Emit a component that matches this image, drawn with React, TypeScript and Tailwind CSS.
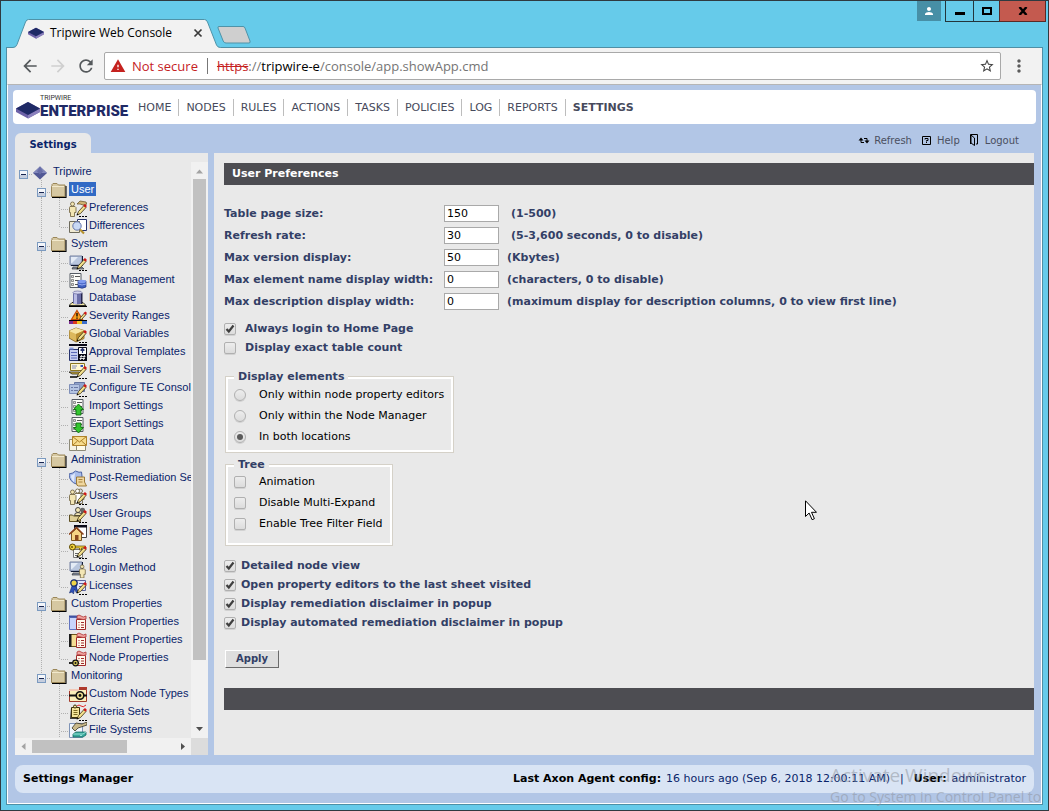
import type { ReactNode } from "react";
import { MdArrowBack, MdArrowForward, MdMoreVert, MdPerson, MdRefresh, MdStarBorder, MdWarning } from "react-icons/md";

const VERDANA = "font-['Verdana','DejaVu_Sans',sans-serif]";

/* ---------- tree icons, drawn on an 18x18 grid ---------- */

const Pencil = () => (
  <g>
    <path d="M8 15l1.500-3.500 5.500-6 2 2-5.500 6z" fill="#f3e08c" stroke="#3a2c10" strokeWidth="0.8" />
    <path d="M14.300 5.500l1.700-1.500 2 2-1.700 1.800z" fill="#d01818" />
    <path d="M7.500 15.500l1-2 1 1z" fill="#000" />
    <path d="M10 16.500h8" stroke="#000" strokeDasharray="2 1" />
  </g>
);

const Person = ({ x = 0, y = 0, fill = "#f3e6b4" }: { x?: number; y?: number; fill?: string }) => (
  <g transform={`translate(${x} ${y})`} fill={fill} stroke="#6b5d3a" strokeWidth="0.8">
    <circle cx="3.5" cy="3" r="2" />
    <path d="M1 5.500h5l1 1v5H5.500v4h-4v-4H.5v-5z" />
  </g>
);

const Screen = () => (
  <g>
    <path d="M1 2h12v9H1z" fill="#b9c6de" stroke="#7480a0" />
    <path d="M2 3h7l-6 6H2z" fill="#e4ebf6" />
    <path d="M13.500 2v9.500H2" fill="none" stroke="#111a35" />
    <path d="M4 13h9l2 2H3z" fill="#8a94a8" stroke="#222" strokeWidth="0.6" />
  </g>
);

const Sheet = ({ x = 2, y = 1 }: { x?: number; y?: number }) => (
  <g transform={`translate(${x} ${y})`}>
    <path d="M0 .5h11v14H0z" fill="#fbfbf7" stroke="#555b63" />
    <path d="M5 3.500h5M5 7.500h5M5 11.500h5" stroke="#555" />
    <path d="M1.500 2.500h2v2h-2zM1.500 6.500h2v2h-2zM1.500 10.500h2v2h-2z" fill="#ddd" stroke="#666" strokeWidth="0.7" />
  </g>
);

const RedSheet = () => (
  <g>
    <path d="M7.500 5.500h9v10h-9z" fill="#fff8ea" stroke="#a02b2b" />
    <path d="M8 2q2-2 4 0t5 0v3q-3 1-5 0t-4 0z" fill="#f0a5a0" stroke="#b03434" strokeWidth="0.8" />
    <path d="M9.500 8.500h1M12 8.500h3M9.500 11h1M12 11h3M9.500 13.500h1M12 13.500h3" stroke="#a02b2b" />
  </g>
);

const glyphs: Record<string, ReactNode> = {
  userPrefs: (
    <g>
      <Person y={1} />
      <path d="M8 4l3-3 6 1 1 2-4 1-3-1z" fill="#cfb475" stroke="#5e4a1e" strokeWidth="0.7" />
      <Pencil />
    </g>
  ),
  differences: (
    <g>
      <path d="M8.500 1.500h9v11h-9z" fill="#fff" stroke="#27336e" />
      <path d="M.5 3.500h10v11H.5z" fill="#efe9d2" stroke="#6d6a5c" />
      <circle cx="8" cy="8" r="4.200" fill="#c8d8f4" stroke="#6676ac" />
      <path d="M11 11.500l4 4" stroke="#b5922e" strokeWidth="2.200" />
    </g>
  ),
  system: (
    <g>
      <Screen />
      <Pencil />
    </g>
  ),
  log: (
    <g>
      <Sheet x={1} />
      <path d="M9 9v6q4 2.500 8 0V9z" fill="#3f5fc0" stroke="#23357e" strokeWidth="0.7" />
      <ellipse cx="13" cy="9.500" rx="4" ry="1.800" fill="#7f9af0" />
      <path d="M9 12q4 2 8 0" fill="none" stroke="#aebfff" strokeWidth="0.8" />
    </g>
  ),
  database: (
    <g>
      <path d="M0 15.500l3-3h11l3 3z" fill="#f3e7a6" stroke="#000" strokeWidth="0.8" />
      <path d="M0 16.500h18" stroke="#000" />
      <path d="M4 2.500v11q4.500 2 9 0v-11z" fill="#6d6fa8" />
      <path d="M5 3v11h3V3z" fill="#b9bbe4" />
      <path d="M12 3h1.500v11H12z" fill="#26264f" />
      <ellipse cx="8.500" cy="2.500" rx="4.500" ry="1.500" fill="#d5d6ef" stroke="#55568c" strokeWidth="0.6" />
    </g>
  ),
  severity: (
    <g>
      <path d="M8 2.500l5.500 9h-11z" fill="#f8a21e" stroke="#c84d0a" strokeWidth="1.200" />
      <path d="M8 5v3.500M8 9.500v1.200" stroke="#000" strokeWidth="1.300" />
      <path d="M10.500 11.500l1-2 4-4.500 1.500 1.500-4.500 5z" fill="#f3e08c" stroke="#3a2c10" strokeWidth="0.8" />
      <path d="M14.500 5l2-1.500 1.500 1.500-1.500 2z" fill="#d01818" />
      <path d="M0 12.500h18" stroke="#000" />
      <path d="M0 13h4v3H0z" fill="#7b2c8f" />
      <path d="M4 13h4v3H4z" fill="#db3a20" />
      <path d="M8 13h5v3H8z" fill="#f2c520" />
      <path d="M13 13h5v3h-5z" fill="#3c6fcb" />
    </g>
  ),
  variables: (
    <g>
      <path d="M0 5l7-3 8 2.500v8L7 16l-7-4z" fill="#dcb85c" stroke="#7d5c14" strokeWidth="0.8" />
      <path d="M0 5l7 3 8-3.500L7 2z" fill="#f6e5a4" />
      <path d="M7 8v8l8-3.500v-8z" fill="#b98e31" />
      <Pencil />
    </g>
  ),
  approval: (
    <g>
      <path d="M0 0h18v2H0z" fill="#0a0a18" />
      <path d="M.5 5.500h9v11h-9z" fill="#c5cdf0" stroke="#27336e" />
      <path d="M.5 3.500h4v2h-4z" fill="#8b9be0" />
      <path d="M2 8.500h6M2 11.500h6M2 14h6" stroke="#5a68b8" />
      <path d="M9.500 3.500h8v13h-8z" fill="#fff" stroke="#0a0a18" />
      <path d="M13.500 4v5M11.500 6.500l2-2 2 2" stroke="#27336e" strokeWidth="1.200" fill="none" />
      <path d="M9 10h9v7H9z" fill="#0a0a18" />
      <path d="M12.500 11l-1 5M15.500 11l-1 5M11 12.500h5.500M10.500 14.500H16" stroke="#fff" strokeWidth="0.8" />
    </g>
  ),
  email: (
    <g>
      <path d="M1.500 1.500h14v7h-14z" fill="#fff7d0" stroke="#8a741f" />
      <path d="M3 4h5M3 6h4" stroke="#8089bb" />
      <path d="M11.500 3h2.500v2h-2.500z" fill="#2f55c0" />
      <path d="M0 10h10l3 2H3z" fill="#e3c24c" stroke="#000" strokeWidth="0.7" />
      <path d="M1 15h7" stroke="#000" strokeWidth="1.500" />
      <Pencil />
    </g>
  ),
  configure: (
    <g>
      <path d="M5.500 2.500h10v9h-10z" fill="#8fa3cc" stroke="#6474a0" />
      <path d="M.5 4.500h10v9H.5z" fill="#b4c4e2" stroke="#7f8fb8" />
      <path d="M2 7.500h2M5 7.500h4M2 10.500h2M5 10.500h4" stroke="#6b7aa6" />
      <Pencil />
    </g>
  ),
  importing: (
    <g>
      <Sheet x={3} />
      <path d="M9.500 6l5 5.500h-2.500v5.500H7v-5.500H4.500z" fill="#34c52e" stroke="#0f6e10" strokeWidth="0.9" />
    </g>
  ),
  exporting: (
    <g>
      <Sheet x={3} />
      <path d="M9.500 17l5-5.500H12V7H7v4.500H4.500z" fill="#34c52e" stroke="#0f6e10" strokeWidth="0.9" />
    </g>
  ),
  support: (
    <g>
      <path d="M.5 5.500h12v11H.5z" fill="#f7f3e2" stroke="#8d8a78" />
      <path d="M7.500 11.500h9v5h-9z" fill="#fffbe9" stroke="#8d8a78" />
      <path d="M3.500 2.500h14v9h-14z" fill="#f7dc8c" stroke="#b0832b" />
      <path d="M3.500 2.500l7 5.500 7-5.500M4 11l4.500-4M17 11l-4.500-4" fill="none" stroke="#a1741c" strokeWidth="0.9" />
    </g>
  ),
  remediation: (
    <g>
      <path d="M6.500 1q4 2 6 1 2 9-4 12.500Q0 12 0 4q4-.5 6.500-3z" fill="#a9bdea" stroke="#4c63a4" />
      <path d="M6 3q-2 2-4 2.500 0 4 3 6.500z" fill="#dfe8fb" />
      <path d="M7.500 7h8v5l2 4h-8q-2 0-2-3z" fill="#f0d79e" stroke="#946f29" strokeWidth="0.9" />
      <path d="M9.500 9.500h4M9.500 12h4" stroke="#946f29" strokeWidth="0.8" />
    </g>
  ),
  users: (
    <g>
      <Person x={8} fill="#d8dcea" />
      <Person x={5} y={0} fill="#fff" />
      <Person x={0} y={1} />
      <Pencil />
    </g>
  ),
  groups: (
    <g>
      <path d="M12 2q4-1 4 2v4h-4z" fill="#666" />
      <circle cx="9" cy="4" r="2.500" fill="#f3e6b4" stroke="#222" strokeWidth="0.8" />
      <path d="M5.500 9.500q0-3 3.500-3t3.500 3z" fill="#f3e6b4" stroke="#222" strokeWidth="0.8" />
      <path d="M.5 9h3l1 1h7v5.500H.5z" fill="#dfcf96" stroke="#5d4f22" />
      <Pencil />
    </g>
  ),
  home: (
    <g>
      <path d="M5.500 2.500h12v11h-12z" fill="#fff" stroke="#444" />
      <path d="M5 1h13v2.500H5z" fill="#0a0a18" />
      <path d="M2.500 9v7.500h10V9l-5-4.500z" fill="#f6d483" stroke="#7d5620" />
      <path d="M0 10.500L7.500 3.500l7 7" fill="none" stroke="#8a3f17" strokeWidth="1.500" />
      <path d="M6 11h3.500v5.500H6z" fill="#8a4a1e" />
    </g>
  ),
  roles: (
    <g>
      <path d="M4.500 7.500h9v8h-9z" fill="#f8f8f0" stroke="#777" />
      <path d="M6 11.500h4M6 13.500h3" stroke="#666" />
      <circle cx="3.500" cy="5" r="3" fill="#f1d23c" stroke="#5c4700" />
      <circle cx="3" cy="5" r="0.900" fill="#5c4700" />
      <path d="M6.500 4h10v4h-2V6h-2v2h-2V6h-4z" fill="#f1d23c" stroke="#5c4700" strokeWidth="0.7" />
      <Pencil />
    </g>
  ),
  login: (
    <g>
      <Screen />
      <g transform="translate(10 4) scale(0.9)">
        <Person />
      </g>
    </g>
  ),
  licenses: (
    <g>
      <path d="M7.500 2.500h9v10h-9z" fill="#e0e4fa" stroke="#5a6299" />
      <path d="M10 5.500h5M10 8.500h4" stroke="#5a6299" />
      <path d="M3 8l-2.500 7 2.500-1 1.500 2 1-5 2 4 1.500-2L6.500 8z" fill="#2d50b8" stroke="#142a6e" strokeWidth="0.6" />
      <circle cx="5" cy="5" r="3.200" fill="#f0d548" stroke="#142a6e" strokeWidth="1.300" />
      <Pencil />
    </g>
  ),
  version: (
    <g>
      <path d="M.5 3.500h8v12h-8z" fill="#c9d4fb" stroke="#6274c0" />
      <path d="M0 1.500h9v2H0z" fill="#4053a3" />
      <RedSheet />
    </g>
  ),
  element: (
    <g>
      <path d="M.5 2.500h9v12h-9z" fill="#f3dd92" stroke="#6a551a" />
      <path d="M0 2h2.500v13H0z" fill="#1b1b1b" />
      <RedSheet />
    </g>
  ),
  node: (
    <g>
      <RedSheet />
      <path d="M0 13h10" stroke="#111" strokeWidth="1.800" />
      <circle cx="6.500" cy="13" r="2.800" fill="#d6c55a" stroke="#111" strokeWidth="1.200" />
      <circle cx="6.500" cy="13" r="1" fill="#111" />
    </g>
  ),
  nodeTypes: (
    <g>
      <path d="M.5 3.500h17v12H.5z" fill="#fbf0bb" stroke="#a33a2b" />
      <path d="M0 3h10v2H0z" fill="#f3c9b7" />
      <path d="M10 1h8v2.500h-8z" fill="#b03a2e" />
      <path d="M0 9.500h18" stroke="#111" strokeWidth="2" />
      <circle cx="11" cy="9.500" r="3.800" fill="#efdf8f" stroke="#111" strokeWidth="1.600" />
      <circle cx="11" cy="9.500" r="1.400" fill="#111" />
    </g>
  ),
  criteria: (
    <g>
      <path d="M1 15l1-11h8v11H2z" fill="#3d3d3d" />
      <path d="M2.500 3.500h8v10h-8z" fill="#f4e59a" stroke="#3b2f0a" />
      <circle cx="6" cy="2.500" r="1.500" fill="#f4e59a" stroke="#3b2f0a" />
      <path d="M4.500 6.500h4M4.500 8.500h4M4.500 10.500h4" stroke="#7b6a22" />
      <path d="M8 2q2-2 4 0t5-1" fill="none" stroke="#e02828" />
      <Pencil />
    </g>
  ),
  files: (
    <g>
      <path d="M.5 1.500h13v14H.5z" fill="#f0f6fc" stroke="#7e93b6" />
      <path d="M3 6l4-5 6 1 5-2v3l-6 2-3 1-3 3z" fill="#c9b98a" stroke="#3a3524" strokeWidth="0.8" />
      <path d="M4 12l3-2h10v3l-3 2H4z" fill="#38a89b" stroke="#146b62" strokeWidth="0.8" />
      <path d="M4 12h10l3-2M11 13.500h2" fill="none" stroke="#aef0e6" strokeWidth="0.8" />
    </g>
  ),
};

const Folder = () => (
  <svg viewBox="1 0 18 18" className="mt-0.5 size-[18px] shrink-0" aria-hidden="true">
    <path d="M2 4.500V2.500l1-1h4l1.500 1.500h6.500v11.500H1.500v-10z" fill="#d6c8a2" stroke="#9a8658" />
    <path d="M2 4.500h12" stroke="#f2e9cc" />
    <path d="M16 4v11.500H2" fill="none" stroke="#000" strokeWidth="1.100" />
  </svg>
);

const Toggle = ({ up = true, down = true }: { up?: boolean; down?: boolean }) => (
  <svg viewBox="0 0 18 18" className="size-[18px] shrink-0" shapeRendering="crispEdges" aria-hidden="true">
    {up && <path d="M8.500 0v8" stroke="#b0b0b0" strokeDasharray="1 1" />}
    {down && <path d="M8.500 17v1" stroke="#b0b0b0" />}
    <path d="M14 12.500h4" stroke="#b0b0b0" strokeDasharray="1 1" />
    <path d="M4.500 8.500h8v8h-8z" fill="#f4f6fa" stroke="#7b9ac0" />
    <path d="M5 13h7v3H5z" fill="#c6cede" />
    <path d="M6 12.500h5" stroke="#16244f" />
  </svg>
);

const Guide = ({ tee, last }: { tee?: boolean; last?: boolean }) => (
  <svg viewBox="0 0 18 18" className="size-[18px] shrink-0" shapeRendering="crispEdges" aria-hidden="true">
    <path d={last ? "M8.500 0v12" : "M8.500 0v18"} stroke="#b0b0b0" strokeDasharray="1 1" />
    {tee && <path d="M10 11.500h7" stroke="#b0b0b0" strokeDasharray="1 1" />}
  </svg>
);

type Group = { name: string; items: [string, string][] };

const groups: Group[] = [
  { name: "User", items: [["Preferences", "userPrefs"], ["Differences", "differences"]] },
  {
    name: "System",
    items: [
      ["Preferences", "system"],
      ["Log Management", "log"],
      ["Database", "database"],
      ["Severity Ranges", "severity"],
      ["Global Variables", "variables"],
      ["Approval Templates", "approval"],
      ["E-mail Servers", "email"],
      ["Configure TE Console", "configure"],
      ["Import Settings", "importing"],
      ["Export Settings", "exporting"],
      ["Support Data", "support"],
    ],
  },
  {
    name: "Administration",
    items: [
      ["Post-Remediation Settings", "remediation"],
      ["Users", "users"],
      ["User Groups", "groups"],
      ["Home Pages", "home"],
      ["Roles", "roles"],
      ["Login Method", "login"],
      ["Licenses", "licenses"],
    ],
  },
  {
    name: "Custom Properties",
    items: [["Version Properties", "version"], ["Element Properties", "element"], ["Node Properties", "node"]],
  },
  {
    name: "Monitoring",
    items: [["Custom Node Types", "nodeTypes"], ["Criteria Sets", "criteria"], ["File Systems", "files"]],
  },
];

const Arrow = ({ d, fill = "#505050" }: { d: string; fill?: string }) => (
  <svg viewBox="0 0 17 17" className="size-[17px] shrink-0" aria-hidden="true">
    <path d={d} fill={fill} />
  </svg>
);

function Tree() {
  return (
    <aside className="flex w-[193px] shrink-0 flex-col bg-[#e9e9e9]">
      <div className="flex min-h-0 flex-1 pt-[9px]">
        <ul className="min-w-0 flex-1 overflow-hidden font-['Liberation_Sans',Arial,sans-serif] text-[11px] leading-[18px] whitespace-nowrap text-[#0a246a]">
          <li className="flex h-[18px]">
            <Toggle up={false} down={false} />
            <svg viewBox="0 0 18 18" className="mt-0.5 size-[18px] shrink-0" aria-hidden="true">
              <path d="M7 2.500l7 6.500-7 6.500L0 9z" fill="#515895" />
              <path d="M7 2.500L0 9h14z" fill="#8187bb" />
              <path d="M7 2.500l3 5-3 3-3-3z" fill="#696fa8" />
            </svg>
            <a href="#tripwire" className="px-0.5">Tripwire</a>
          </li>
          {groups.map((group, g) => {
            const lastGroup = g === groups.length - 1;
            return (
              <li key={group.name}>
                <div className="flex h-[18px] pl-[18px]">
                  <Toggle down={!lastGroup} />
                  <Folder />
                  <a
                    href={"#" + group.name}
                    className={g === 0 ? "my-0.5 h-[14px] bg-[#316ac5] px-0.5 leading-[14px] text-white" : "px-0.5"}
                  >
                    {group.name}
                  </a>
                </div>
                <ul>
                  {group.items.map(([label, icon], i) => (
                    <li key={label} className={lastGroup ? "flex h-[18px] pl-9" : "flex h-[18px] pl-[18px]"}>
                      {!lastGroup && <Guide />}
                      <Guide tee last={!lastGroup && i === group.items.length - 1} />
                      <svg viewBox="0 0 18 18" className="mt-0.5 size-[18px] shrink-0" aria-hidden="true">
                        {glyphs[icon]}
                      </svg>
                      <a href={"#" + icon} className="px-0.5">{label}</a>
                    </li>
                  ))}
                </ul>
              </li>
            );
          })}
        </ul>
        <div className="flex w-[17px] shrink-0 flex-col items-center bg-[#f1f1f1]" aria-hidden="true">
          <Arrow d="M5 11.500l3.500-4 3.500 4z" fill="#a3a3a3" />
          <div className="flex w-full flex-1 flex-col items-center">
            <div className="w-[13px] flex-[480] bg-[#c1c1c1]" />
            <div className="flex-[61]" />
          </div>
          <Arrow d="M5 6l3.500 4L12 6z" />
        </div>
      </div>
      <div className="flex h-[17px] shrink-0" aria-hidden="true">
        <div className="flex flex-1 items-center bg-[#f1f1f1]">
          <Arrow d="M10.500 5l-4 3.500 4 3.500z" fill="#a3a3a3" />
          <div className="flex h-[13px] flex-1">
            <div className="flex-[95] bg-[#c1c1c1]" />
            <div className="flex-[47]" />
          </div>
          <Arrow d="M7 5l4 3.500L7 12z" />
        </div>
        <div className="w-[17px] bg-[#dcdcdc]" />
      </div>
    </aside>
  );
}

/* ---------- form controls ---------- */

type CheckProps = { id: string; label: string; checked?: boolean; gap?: string; text?: string };

function Check({ id, label, checked = false, gap = "gap-[5px]", text = "font-bold text-[#333f66]" }: CheckProps) {
  return (
    <div className={"flex h-[19px] items-center " + gap}>
      <span className="grid size-3 shrink-0">
        <input
          id={id}
          type="checkbox"
          defaultChecked={checked}
          className="peer size-3 appearance-none rounded-xs border border-[#b0b0b0] bg-linear-to-b from-[#ededed] to-[#dcdcdc] shadow-[0_1px_0_#d2d2d2] [grid-area:1/1]"
        />
        <svg viewBox="0 0 12 12" className="pointer-events-none invisible size-3 [grid-area:1/1] peer-checked:visible" aria-hidden="true">
          <path d="M2.500 6l2.300 2.500L9.500 2.500" fill="none" stroke="#3f3f3f" strokeWidth="2.200" />
        </svg>
      </span>
      <label htmlFor={id} className={text}>{label}</label>
    </div>
  );
}

function Radio({ id, label, checked = false }: { id: string; label: string; checked?: boolean }) {
  return (
    <div className="flex h-[21px] items-center gap-[13px]">
      <span className="grid size-3 shrink-0 place-items-center">
        <input
          id={id}
          name="display-elements"
          type="radio"
          defaultChecked={checked}
          className="peer size-3 appearance-none rounded-full border border-[#b0b0b0] bg-linear-to-b from-[#ededed] to-[#dcdcdc] shadow-[0_1px_0_#d2d2d2] [grid-area:1/1]"
        />
        <span className="pointer-events-none invisible size-1.5 rounded-full bg-[#5a5a5a] [grid-area:1/1] peer-checked:visible" />
      </span>
      <label htmlFor={id} className="text-black">{label}</label>
    </div>
  );
}

const fields: [string, string, string, boolean][] = [
  ["Table page size:", "150", "(1-500)", true],
  ["Refresh rate:", "30", "(5-3,600 seconds, 0 to disable)", true],
  ["Max version display:", "50", "(Kbytes)", false],
  ["Max element name display width:", "0", "(characters, 0 to disable)", false],
  ["Max description display width:", "0", "(maximum display for description columns, 0 to view first line)", false],
];

const FIELDSET = "ml-px w-fit border border-[#d5d1c8] pr-[9px] pl-2 shadow-[inset_0_0_0_2px_#fff]";
const LEGEND = "h-[14px] bg-[#e9e9e9] px-1 leading-4 font-bold text-[#333f66]";

function Preferences() {
  return (
    <main className="min-w-0 flex-1 overflow-hidden bg-[#e9e9e9] pt-2.5 pl-2.5 text-[11px] leading-[14px]">
      <h1 className="h-[22px] bg-[#4d4d52] px-2 leading-[22px] font-bold text-white">User Preferences</h1>
      <form className="pt-[18px]" onSubmit={(e) => e.preventDefault()}>
        {fields.map(([label, value, hint, wide], i) => (
          <div key={label} className="flex h-[22px] items-center font-bold whitespace-nowrap text-[#333f66]">
            <label htmlFor={"field" + i} className="w-[220px] shrink-0">{label}</label>
            <input
              id={"field" + i}
              defaultValue={value}
              className="mb-0.5 h-[17px] w-[55px] border border-[#a9a9a9] bg-white px-0.5 font-normal text-black"
            />
            <span className={wide ? "pl-3" : "pl-2"}>{hint}</span>
          </div>
        ))}
        <div className="pt-1.5">
          <Check id="login-home" label="Always login to Home Page" checked gap="gap-[9px]" />
          <Check id="exact-count" label="Display exact table count" gap="gap-[9px]" />
        </div>
        <fieldset className={FIELDSET + " mt-3 pt-px pb-[5px]"}>
          <legend className={LEGEND}>Display elements</legend>
          <Radio id="property-editors" label="Only within node property editors" />
          <Radio id="node-manager" label="Only within the Node Manager" />
          <Radio id="both" label="In both locations" checked />
        </fieldset>
        <fieldset className={FIELDSET + " mt-1 pb-[11px]"}>
          <legend className={LEGEND}>Tree</legend>
          {["Animation", "Disable Multi-Expand", "Enable Tree Filter Field"].map((label, i) => (
            <div key={label} className="flex h-[21px] items-center">
              <Check id={"tree" + i} label={label} gap="gap-[13px]" text="text-black" />
            </div>
          ))}
        </fieldset>
        <div className="pt-2.5">
          <Check id="detailed" label="Detailed node view" checked />
          <Check id="last-sheet" label="Open property editors to the last sheet visited" checked />
          <Check id="disclaimer" label="Display remediation disclaimer in popup" checked />
          <Check id="auto-disclaimer" label="Display automated remediation disclaimer in popup" checked />
        </div>
        <button
          type="submit"
          className="mt-[18px] ml-px block h-[18px] w-[54px] border border-t-white border-r-[#6a6a6a] border-b-[#6a6a6a] border-l-white bg-[#dedede] text-[10px] leading-[16px] font-bold text-[#333f66]"
        >
          Apply
        </button>
      </form>
      <div className="mt-5 h-[22px] bg-[#4d4d52]" />
    </main>
  );
}

/* ---------- browser window ---------- */

const Cube = ({ className }: { className: string }) => (
  <svg viewBox="0 0 24 18" className={className} aria-hidden="true">
    <path d="M0 7.500L12 1l12 6.500V11l-12 6.500L0 11z" fill="#6d62a8" />
    <path d="M12 14v3.500L24 11V7.500z" fill="#8b81bd" />
    <path d="M0 7.500L12 1l12 6.500L12 14z" fill="#1f2a66" />
  </svg>
);

function WindowFrame({ children }: { children: ReactNode }) {
  return (
    <div className="flex h-screen flex-col border border-[#2f3a40] bg-[#66cbea] px-[5px] pb-[5px] font-['Segoe_UI','Open_Sans','Noto_Sans',sans-serif]">
      <header className="flex h-[46px] shrink-0 items-start">
        <div className="relative mt-[18px] ml-[7px] flex h-7 w-[208px] items-center pr-[18px] pl-[15px]">
          <svg viewBox="0 0 208 29" className="absolute inset-x-0 top-0 h-[29px] w-full" aria-hidden="true">
            <path d="M0 29v-.5q3 0 4-3L12.500 3q1-2.500 3-2.500h176q2 0 3 2.500l9 23q1 2.500 4 2.500v.5z" fill="#f2f2f2" />
            <path d="M0 28.500q3 0 4-3L12.500 3q1-2.500 3-2.500h176q2 0 3 2.500l9 23q1 2.500 4 2.500" fill="none" stroke="#4f93a8" />
          </svg>
          <Cube className="relative h-3 w-4" />
          <span className="relative ml-1.5 flex-1 text-[12px] leading-4 whitespace-nowrap text-black">Tripwire Web Console</span>
          <button type="button" aria-label="Close tab" className="relative">
            <svg viewBox="0 0 10 10" className="size-2.5" aria-hidden="true">
              <path d="M1.500 1.500l7 7M8.500 1.500l-7 7" stroke="#3a3a3a" strokeWidth="1.700" />
            </svg>
          </button>
        </div>
        <button type="button" aria-label="New tab" className="mt-[25px] -ml-1">
          <svg viewBox="0 0 34 18" className="h-[18px] w-[34px]" aria-hidden="true">
            <path d="M2 .5h24q1.500 0 2 1.500l5 13q.6 2-1 2H9q-2 0-2.800-2L1 2Q.5.500 2 .5z" fill="#cfcfcf" stroke="#4f93a8" />
          </svg>
        </button>
        <div className="ml-auto flex items-start">
          <button type="button" aria-label="Profile" className="mr-1 flex h-5 w-6 items-center justify-center bg-[#478fa6]">
            <MdPerson className="size-3 text-white" />
          </button>
          <button type="button" aria-label="Minimize" className="flex h-[21px] w-[29px] items-center justify-center border border-t-0 border-[#23353b]">
            <span className="mt-1 h-[3px] w-2.5 bg-black" />
          </button>
          <button type="button" aria-label="Maximize" className="flex h-[21px] w-[25px] items-center justify-center border-b border-[#23353b]">
            <span className="h-2 w-2.5 border-2 border-black" />
          </button>
          <button type="button" aria-label="Close" className="-mr-[3px] flex h-[21px] w-[47px] items-center justify-center border border-t-0 border-[#5a2a26] bg-[#c45a4f]">
            <svg viewBox="0 0 10 8" className="h-2 w-2.5" aria-hidden="true">
              <path d="M1.500 0l7 8M8.500 0l-7 8" stroke="#000" strokeWidth="2.400" />
            </svg>
          </button>
        </div>
      </header>
      <div className="flex min-h-0 flex-1 flex-col border border-[#4f8fa5]">
        <div className="flex h-9 shrink-0 items-center bg-[#f2f2f2] px-[13px]">
          <div className="flex items-center gap-2">
            <button type="button" aria-label="Back"><MdArrowBack className="size-5 text-[#55595c]" /></button>
            <button type="button" aria-label="Forward"><MdArrowForward className="size-5 text-[#cfcfcf]" /></button>
            <button type="button" aria-label="Reload"><MdRefresh className="size-5 text-[#55595c]" /></button>
          </div>
          <div className="ml-2 flex h-7 min-w-0 flex-1 items-center rounded-xs border border-[#a9a9a9] bg-white px-[5px] text-[13px] leading-[18px]">
            <MdWarning className="size-4 text-[#c5221f]" />
            <span className="ml-1.5 text-[#c5221f]">Not secure</span>
            <span className="mx-[9px] h-4 w-px bg-[#777]" />
            <span className="flex-1 whitespace-nowrap text-[#757575]">
              <span className="text-[#c5221f] line-through">https</span>://<span className="text-black">tripwire-e</span>/console/app.showApp.cmd
            </span>
            <button type="button" aria-label="Bookmark"><MdStarBorder className="size-4 text-[#444]" /></button>
          </div>
          <button type="button" aria-label="Menu" className="ml-2"><MdMoreVert className="size-5 text-[#5a5a5a]" /></button>
        </div>
        <div className="flex min-h-0 flex-1 flex-col border border-[#fff] border-t-[#b5b5b5]">{children}</div>
      </div>
    </div>
  );
}

const sections = ["HOME", "NODES", "RULES", "ACTIONS", "TASKS", "POLICIES", "LOG", "REPORTS", "SETTINGS"];

export default function App() {
  return (
    <div className="relative overflow-hidden">
      <WindowFrame>
        <div className={"flex min-h-0 flex-1 flex-col bg-[#b2c6e6] px-[5px] pt-[5px] pb-[10px] " + VERDANA}>
          <div className="flex h-[34px] shrink-0 items-center rounded bg-white pl-[3px]">
            <div className="flex w-[115px] shrink-0 items-center">
              <Cube className="mt-1.5 h-[18px] w-6 shrink-0" />
              <div className="flex flex-col font-['Roboto',sans-serif] whitespace-nowrap">
                <span className="h-[7px] text-[7px] leading-[7px] text-[#333]">TRIPWIRE</span>
                <span className="text-[15px] leading-[18px] font-black text-[#1f2a66]">ENTERPRISE</span>
              </div>
            </div>
            <nav className="flex divide-x divide-[#bdbdbd] text-[11px] leading-[17px] text-[#474a5c]">
              {sections.map((name) => (
                <a key={name} href={"#" + name.toLowerCase()} className={name === "SETTINGS" ? "px-[7px] font-bold" : "px-[7px]"}>
                  {name}
                </a>
              ))}
            </nav>
          </div>
          <div className="flex h-[29px] shrink-0 items-end justify-between px-0.5">
            <a href="#settings" className="flex h-5 w-[76px] items-center justify-center rounded-t-md bg-[#e9e9e9] pt-0.5 text-[10px] font-bold text-[#0a246a]">
              Settings
            </a>
            <div className="flex h-[26px] items-center pr-[15px] text-[10px] text-[#4a4f60]">
              <a href="#refresh" className="flex items-center gap-1">
                <svg viewBox="0 0 12 9" className="h-[9px] w-3" aria-hidden="true">
                  <path d="M3 4v2.500h3M6 2.500h3V5" fill="none" stroke="#000" />
                  <path d="M.5 4.500L3 1.500l2.500 3zM6.500 4.500h5L9 7.500z" />
                </svg>
                Refresh
              </a>
              <a href="#help" className="ml-2.5 flex items-center gap-1.5">
                <svg viewBox="0 0 9 9" className="size-[9px]" aria-hidden="true">
                  <path d="M.5.500h8v8h-8z" fill="none" stroke="#000" />
                  <path d="M3 3.500V2.500h3v2H4.500v1M4.500 6v1" fill="none" stroke="#000" />
                </svg>
                Help
              </a>
              <a href="#logout" className="ml-2.5 flex items-center gap-1.5">
                <svg viewBox="0 0 9 12" className="h-3 w-[9px]" aria-hidden="true">
                  <path d="M.5 10V.5h7V10H6" fill="none" stroke="#000" />
                  <path d="M1 1l3.500 3v7.500L1 9z" fill="#b2c6e6" stroke="#000" />
                </svg>
                Logout
              </a>
            </div>
          </div>
          <div className="flex min-h-0 flex-1 gap-1.5 px-0.5">
            <Tree />
            <Preferences />
          </div>
          <footer className="mx-0.5 mt-2.5 flex h-7 shrink-0 items-center justify-between rounded-lg bg-[#d9e4f4] px-2 text-[11px] whitespace-nowrap text-[#0a246a]">
            <strong className="text-black">Settings Manager</strong>
            <span className="flex">
              <strong className="mr-[5px] text-black">Last Axon Agent config:</strong>
              16 hours ago (Sep 6, 2018 12:00:11 AM)
              <span className="mx-2.5">|</span>
              <strong className="mr-[5px] text-black">User:</strong>
              administrator
            </span>
          </footer>
        </div>
      </WindowFrame>
      <div className="pointer-events-none absolute right-1 bottom-1 w-[215px] font-['Segoe_UI','Open_Sans','Noto_Sans',sans-serif] whitespace-nowrap text-[#8a8f98]/50">
        <p className="text-[19px] leading-6">Activate Windows</p>
        <p className="text-[14px] leading-5">Go to System in Control Panel to</p>
      </div>
      <svg viewBox="0 0 12 21" className="pointer-events-none absolute top-[500px] left-[805px] h-[21px] w-3" aria-hidden="true">
        <path d="M.5.800v15.700l3.600-3.500 3 6.700 2.300-1-2.900-6.400h5z" fill="#fff" stroke="#000" />
      </svg>
    </div>
  );
}
